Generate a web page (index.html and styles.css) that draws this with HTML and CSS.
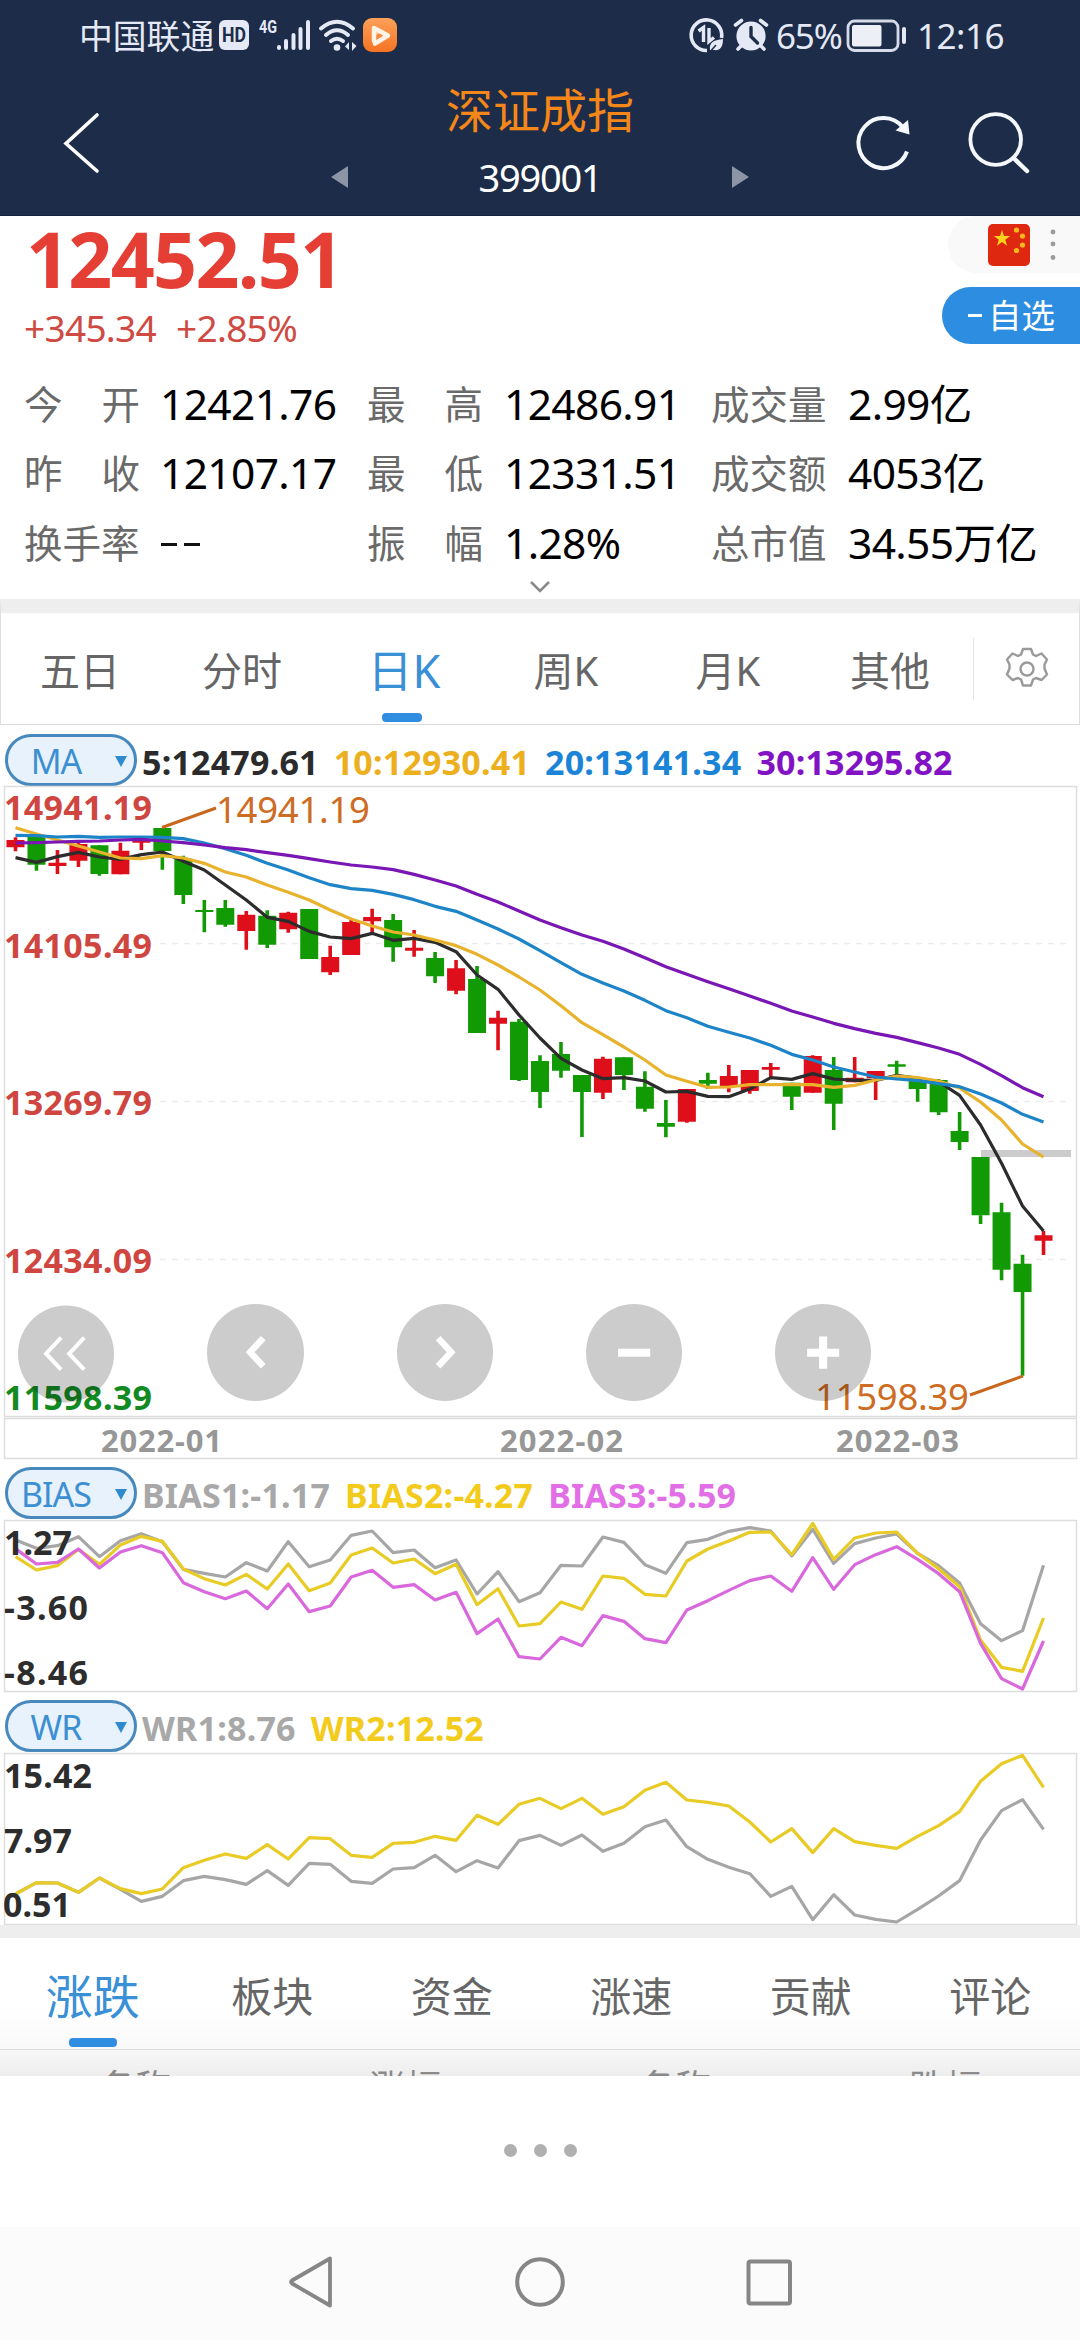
FILE: index.html
```html
<!DOCTYPE html>
<html lang="zh-CN">
<head>
<meta charset="utf-8">
<title>深证成指 399001</title>
<link rel="stylesheet" href="styles.css">
</head>
<body>
<header class="top">
  <div class="status">
    <span class="carrier">中国联通</span>
    <svg class="status-icons" width="186" height="50" viewBox="217 12 186 50">
      <rect x="219" y="21" width="30" height="30" rx="6" fill="#e4e9f5"/>
      <text x="222" y="43" class="hd" textLength="24" lengthAdjust="spacingAndGlyphs">HD</text>
      <text x="259" y="34" class="g4" textLength="18" lengthAdjust="spacingAndGlyphs">4G</text>
      <g stroke="#e4e9f5" stroke-width="4" stroke-linecap="round">
        <path d="M279 48v1M286 42v7M293.5 36v13M300.500 30v19M308 23v26"/>
      </g>
      <g fill="none" stroke="#e4e9f5" stroke-width="4" stroke-linecap="round">
        <path d="M321 29.500Q337 16 353 29.500M326 36Q337 26.500 348 36M331 42Q337 37.500 343 42"/>
      </g>
      <circle cx="337" cy="48.500" r="3.300" fill="#e4e9f5"/>
      <path d="M349 43v8l-4-3.500zM352 43v9l4.500-5z" fill="#e4e9f5"/>
      <defs><linearGradient id="og" x1="0" y1="0" x2="0" y2="1"><stop offset="0" stop-color="#fca05a"/><stop offset="1" stop-color="#f57322"/></linearGradient></defs>
      <rect x="363" y="19" width="34" height="34" rx="9" fill="url(#og)"/>
      <path d="M374 42V29l14 7.500-13 8" fill="none" stroke="#fff3e6" stroke-width="4.500" stroke-linejoin="round" stroke-linecap="round"/>
      <path d="M374 27l9 5-9 5z" fill="#fff3e6" opacity=".6"/>
    </svg>
    <span class="spacer"></span>
    <svg width="84" height="50" viewBox="687 12 84 50">
      <path d="M707 51.500A15.300 15.300 0 1 1 721.500 39" fill="none" stroke="#e4e9f5" stroke-width="3.600"/>
      <path d="M698.500 32l5-3.500V43M709 29v13.500l5-4" fill="none" stroke="#e4e9f5" stroke-width="3.400"/>
      <path d="M710 51c-1-7 3-10 13-11 0 8-3 12-9 11z" fill="#e4e9f5"/><path d="M709 54l7-8" stroke="#1d2c49" stroke-width="1.500"/>
      <circle cx="751" cy="37" r="14.600" fill="#e4e9f5"/>
      <path d="M735.500 26l6-4.500M766.500 26l-6-4.500M738 50l4-4M764 50l-4-4" stroke="#e4e9f5" stroke-width="3.600" stroke-linecap="round"/>
      <path d="M751 28.500v9l6.500 6.500" fill="none" stroke="#1d2c49" stroke-width="3.400" stroke-linecap="round"/>
    </svg>
    <span class="battery-text">65%</span>
    <svg class="battery" width="66" height="36" viewBox="845 19 66 36">
      <rect x="848" y="22" width="50" height="29.500" rx="6.500" fill="none" stroke="#d5dbe8" stroke-width="2.800"/>
      <rect x="852" y="26" width="29.500" height="21.500" rx="2" fill="#eceff5"/>
      <rect x="902" y="28" width="4" height="17" rx="2" fill="#e4e9f5"/>
    </svg>
    <span class="clock">12:16</span>
  </div>
  <div class="titlebar">
    <svg width="320" height="144" viewBox="0 72 320 144"><path d="M97 115L66 143.500 97 171" fill="none" stroke="#fff" stroke-width="3.600" stroke-linecap="round"/></svg>
    <div class="title">
      <h1>深证成指</h1>
      <div class="code">
        <svg width="18" height="24" viewBox="0 0 18 24"><path d="M17 1v22L0 12z" fill="#8c95a6"/></svg>
        <span>399001</span>
        <svg width="18" height="24" viewBox="0 0 18 24"><path d="M1 1v22l17-11z" fill="#8c95a6"/></svg>
      </div>
    </div>
    <svg width="320" height="144" viewBox="760 72 320 144">
      <path d="M907 151.500A25 25 0 1 1 903 127.500" fill="none" stroke="#f4f8fc" stroke-width="4"/>
      <path d="M908 120l1.500 14.500-14-4z" fill="#f4f8fc"/>
      <circle cx="995.700" cy="139.500" r="25.300" fill="none" stroke="#f4f8fc" stroke-width="3.800"/>
      <path d="M1013.500 158l13.500 13" stroke="#f4f8fc" stroke-width="4.500" stroke-linecap="round"/>
    </svg>
  </div>
</header>

<section class="quote">
  <div class="quote-head">
    <div>
      <div class="price">12452.51</div>
      <div class="change"><span>+345.34</span><span>+2.85%</span></div>
    </div>
    <div class="quote-side">
      <div class="flagbar">
        <svg width="42" height="42" viewBox="0 0 42 42"><rect width="42" height="42" rx="5" fill="#de2910"/><path fill="#ffd21c" d="M14 6l2 6h6.200l-5 3.800 1.900 6-5.100-3.700-5.100 3.700 1.900-6-5-3.800H12z"/><g fill="#f5b81c"><circle cx="28.500" cy="6" r="2.600"/><circle cx="34.500" cy="12" r="2.600"/><circle cx="34.500" cy="21" r="2.600"/><circle cx="28.500" cy="26.500" r="2.600"/></g></svg>
        <svg width="6" height="34" viewBox="0 0 6 34"><g fill="#9b9b9b"><circle cx="3" cy="4" r="2.400"/><circle cx="3" cy="16" r="2.400"/><circle cx="3" cy="29.500" r="2.400"/></g></svg>
      </div>
      <button class="watch"><i></i>自选</button>
    </div>
  </div>
  <dl class="stats">
    <dt><b>今</b><b>开</b></dt><dd>12421.76</dd><dt><b>最</b><b>高</b></dt><dd>12486.91</dd><dt>成交量</dt><dd>2.99亿</dd>
    <dt><b>昨</b><b>收</b></dt><dd>12107.17</dd><dt><b>最</b><b>低</b></dt><dd>12331.51</dd><dt>成交额</dt><dd>4053亿</dd>
    <dt>换手率</dt><dd class="none"><i></i><i></i></dd><dt><b>振</b><b>幅</b></dt><dd>1.28%</dd><dt>总市值</dt><dd>34.55万亿</dd>
  </dl>
  <svg class="more" width="22" height="14" viewBox="0 0 22 14"><path d="M2 2l9 9 9-9" fill="none" stroke="#8a8a8a" stroke-width="2.600"/></svg>
</section>

<nav class="periods">
  <a>五日</a><a>分时</a><a class="on">日K</a><a>周K</a><a>月K</a><a>其他</a>
  <span class="gear">
    <svg width="44" height="46" viewBox="-22 -23 44 46" fill="none" stroke="#9a9a9a" stroke-width="2.400" stroke-linejoin="round">
      <path d="M-4-20h8l2 5.500 3 1.500 5.500-2.500 5.500 6-2.500 5v4l2.500 6-5.500 5.500-5.500-2-3 1.500-2 6h-8l-2-6-3-1.500-5.500 2-5.500-5.500 2.500-6v-4l-2.500-5 5.500-6 5.500 2.500 3-1.500z"/>
      <circle r="6.500"/>
    </svg>
  </span>
</nav>

<div class="legend ma"><button class="pick">MA</button><span class="c-black">5:12479.61</span><span class="c-amber">10:12930.41</span><span class="c-blue">20:13141.34</span><span class="c-purple">30:13295.82</span></div>

<div class="kchart">
<svg width="1080" height="673" viewBox="0 786 1080 673">
  <path class="frame" d="M4.500 786.500H1076.500V1458.500H4.500zM4.500 1416.500H1076.500M4.500 1418.500H1076.500"/>
  <path class="grid" d="M160 943.500H1071M160 1101.500H1071M160 1259.500H1071"/>
  <rect x="981" y="1150" width="90" height="7" fill="#ccc"/>
  <g class="series" transform="matrix(20.98 0 0 .33333 15.500 780)">
    <path class="wick g" d="M1 165V272M4 196V287M7 144V269M8 227V372M9 360V457M10 360V440M12 391V504M14 387V537M18 402V545M20 516V609M22 558V759M24 717V903M25 826V984M26 786V893M27 885V1071M29 832V930M30 874V995M31 960V1072M33 878V927M37 908V990M39 831V1050M42 842V890M43 897V965M44 897V1005M45 996V1110M46 1306V1332M47 1268V1501M48 1424V1787"/>
    <path class="wick r" d="M0 172V214M2 210V282M3 188V261M5 188V283M6 172V210M11 393V509M13 395V458M15 497V585M16 420V525M17 386V459M19 450V530M21 540V643M23 692V811M28 830V957M32 927V1028M34 855V937M35 870V941M36 849V893M38 826V938M40 831V907M41 873V960M49 1353V1425"/>
    <path class="body g" d="M1 170V254M4 196V282M7 144V213M8 236V345M9 390V396M10 384V434M12 407V494M14 387V537M18 420V502M20 534V589M22 597V759M24 725V900M25 843V936M26 822V872M27 885V936M29 832V885M30 920V986M31 1029V1040M33 900V911M37 908V950M39 870V971M42 853V860M43 900V927M44 900V997M45 1053V1086M46 1131V1306M47 1297V1469M48 1451V1536"/>
    <path class="body r" d="M0 180V202M2 248V258M3 192V242M5 212V283M6 178V188M11 404V453M13 398V448M15 531V577M16 426V525M17 411V424M19 503V512M21 565V632M23 713V731M28 836V938M32 927V1025M34 888V918M35 870V933M36 861V869M38 828V938M40 893V907M41 873V895M49 1366V1382"/>
    <polyline class="line l-black" points="0 233 1 247 2 230 3 217 4 231 5 238 6 224 7 216 8 244 9 270 10 315 11 360 12 412 13 424 14 454 15 471 16 476 17 460 18 481 19 475 20 487 21 515 22 585 23 628 24 705 25 774 26 835 27 870 28 896 29 893 30 903 31 936 32 934 33 949 34 950 35 927 36 893 37 898 38 881 39 897 40 901 41 901 42 886 43 895 44 905 45 946 46 1035 47 1150 48 1278 49 1353"/>
    <polyline class="line l-amber" points="0 143 1 162 2 180 3 198 4 216 5 234 6 236 7 227 8 234 9 250 10 276 11 291 12 315 13 337 14 360 15 390 16 417 17 438 18 456 19 465 20 480 21 497 22 523 23 555 24 591 25 630 26 677 27 728 28 764 29 801 30 840 31 885 32 904 33 922 34 921 35 914 36 914 37 914 38 914 39 922 40 916 41 900 42 888 43 893 44 903 45 924 46 966 47 1020 48 1092 49 1131"/>
    <polyline class="line l-blue" points="0 166 1 167 2 171 3 169 4 172 5 171 6 171 7 172 8 176 9 189 10 206 11 226 12 250 13 270 14 293 15 314 16 326 17 331 18 343 19 359 20 379 21 394 22 420 23 447 24 477 25 512 26 548 27 583 28 609 29 633 30 661 31 692 32 713 33 739 34 757 35 774 36 796 37 823 38 840 39 861 40 876 41 891 42 897 43 902 44 911 45 920 46 942 47 969 48 1003 49 1026"/>
    <polyline class="line l-purple" points="0 189 1 188 2 186 3 184 4 183 5 180 6 178 7 183 8 188 9 195 10 203 11 209 12 218 13 226 14 236 15 246 16 255 17 261 18 269 19 283 20 300 21 318 22 343 23 366 24 393 25 420 26 443 27 465 28 484 29 507 30 533 31 560 32 583 33 605 34 626 35 648 36 670 37 693 38 711 39 730 40 746 41 760 42 772 43 788 44 804 45 823 46 853 47 887 48 923 49 950"/>
  </g>
  <path d="M162 827.500L216 808M970 1395L1023 1376" stroke="#c8681e" stroke-width="3" fill="none"/>
  <g class="axis red">
    <text x="4" y="820" textLength="148">14941.19</text>
    <text x="4" y="957.500" textLength="148">14105.49</text>
    <text x="4" y="1114.500" textLength="148">13269.79</text>
    <text x="4" y="1273" textLength="148">12434.09</text>
    <text x="4" y="1410" textLength="148" class="green">11598.39</text>
  </g>
  <g class="mark"><text x="216" y="823" textLength="154">14941.19</text><text x="815" y="1410" textLength="154">11598.39</text></g>
  <g class="dates"><text x="101" y="1451.500" textLength="121">2022-01</text><text x="500" y="1451.500" textLength="123">2022-02</text><text x="836" y="1451.500" textLength="123">2022-03</text></g>
</svg>
<div class="controls">
  <button class="first"><svg viewBox="0 0 96 96"><path d="M43 32L28 48l15 16M66 32L51 48l15 16" fill="none" stroke="#fff" stroke-width="4"/></svg></button>
  <button><svg viewBox="0 0 96 96"><path d="M56 34L43 48l13 14" fill="none" stroke="#fff" stroke-width="6.500"/></svg></button>
  <button><svg viewBox="0 0 96 96"><path d="M41 34l13 14-13 14" fill="none" stroke="#fff" stroke-width="6.500"/></svg></button>
  <button><svg viewBox="0 0 96 96"><path d="M32 48.500h32" stroke="#fff" stroke-width="8"/></svg></button>
  <button><svg viewBox="0 0 96 96"><path d="M32 48.500h32M48 32.500v32" stroke="#fff" stroke-width="8"/></svg></button>
</div>
</div>

<div class="legend bias"><button class="pick">BIAS</button><span class="c-grey">BIAS1:-1.17</span><span class="c-yellow">BIAS2:-4.27</span><span class="c-pink">BIAS3:-5.59</span></div>
<svg class="sub" width="1080" height="172" viewBox="0 1520 1080 172">
  <path class="frame" d="M4.500 1520.500H1076.500V1691.500H4.500z"/>
  <g class="series" transform="matrix(20.98 0 0 .33333 15.500 1460)">
    <polyline class="line l-grey" points="0 240 1 265 2 257 3 230 4 290 5 242 6 221 7 245 8 328 9 340 10 351 11 308 12 333 13 245 14 320 15 300 16 226 17 213 18 278 19 270 20 323 21 300 22 402 23 335 24 425 25 398 26 316 27 318 28 231 29 247 30 314 31 340 32 248 33 238 34 214 35 203 36 213 37 288 38 208 39 310 40 251 41 234 42 222 43 280 44 317 45 369 46 491 47 542 48 512 49 316"/>
    <polyline class="line l-yellow" points="0 290 1 330 2 317 3 268 4 313 5 255 6 229 7 244 8 327 9 356 10 375 11 343 12 387 13 312 14 392 15 369 16 285 17 264 18 309 19 297 20 341 21 313 22 434 23 386 24 498 25 491 26 426 27 448 28 348 29 355 30 403 31 408 32 303 33 267 34 243 35 217 36 216 37 284 38 190 39 298 40 234 41 219 42 216 43 280 44 326 45 380 46 540 47 622 48 634 49 474"/>
    <polyline class="line l-pink" points="0 266 1 312 2 307 3 267 4 324 5 276 6 257 7 278 8 368 9 395 10 416 11 393 12 446 13 372 14 455 15 438 16 351 17 331 18 382 19 374 20 420 21 397 22 521 23 477 24 590 25 597 26 532 27 557 28 467 29 484 30 536 31 548 32 450 33 422 34 391 35 362 36 348 37 394 38 293 39 388 40 314 41 284 42 260 43 298 44 341 45 395 46 550 47 656 48 687 49 543"/>
  </g>
  <g class="axis"><text x="4" y="1554.500" textLength="68">1.27</text><text x="4" y="1620" textLength="84">-3.60</text><text x="4" y="1685" textLength="84">-8.46</text></g>
</svg>

<div class="legend wr"><button class="pick">WR</button><span class="c-grey">WR1:8.76</span><span class="c-yellow">WR2:12.52</span></div>
<svg class="sub" width="1080" height="172" viewBox="0 1753 1080 172">
  <path class="frame" d="M4.500 1753.500H1076.500V1924.500H4.500z"/>
  <g class="series" transform="matrix(20.98 0 0 .33333 15.500 1460)">
    <polyline class="line l-grey" points="0 1302 1 1268 2 1269 3 1297 4 1254 5 1288 6 1324 7 1309 8 1262 9 1249 10 1259 11 1273 12 1232 13 1276 14 1210 15 1213 16 1264 17 1270 18 1227 19 1223 20 1186 21 1235 22 1202 23 1224 24 1142 25 1126 26 1156 27 1125 28 1174 29 1150 30 1100 31 1080 32 1160 33 1198 34 1222 35 1241 36 1309 37 1279 38 1379 39 1304 40 1365 41 1378 42 1386 43 1348 44 1308 45 1262 46 1140 47 1052 48 1019 49 1108"/>
    <polyline class="line l-yellow" points="0 1302 1 1268 2 1269 3 1297 4 1254 5 1286 6 1301 7 1287 8 1223 9 1201 10 1182 11 1195 12 1154 13 1197 14 1133 15 1136 16 1186 17 1192 18 1150 19 1147 20 1129 21 1141 22 1066 23 1093 24 1033 25 1015 26 1046 27 1015 28 1063 29 1040 30 991 31 967 32 1020 33 1027 34 1038 35 1086 36 1146 37 1106 38 1178 39 1106 40 1145 41 1156 42 1165 43 1129 44 1097 45 1055 46 964 47 911 48 886 49 982"/>
  </g>
  <g class="axis"><text x="4" y="1788" textLength="88">15.42</text><text x="4" y="1853" textLength="68">7.97</text><text x="3" y="1917" textLength="68">0.51</text></g>
</svg>

<nav class="boards"><a class="on">涨跌</a><a>板块</a><a>资金</a><a>涨速</a><a>贡献</a><a>评论</a></nav>
<div class="thead"><span>名称</span><span>涨幅</span><span>名称</span><span>跌幅</span></div>
<footer class="dots"><i></i><i></i><i></i></footer>
<div class="sysnav">
  <svg width="48" height="54" viewBox="0 0 48 54"><path d="M43 3.500v47L5 28.500q-2-1.500 0-3z" fill="none" stroke="#868686" stroke-width="3.800" stroke-linejoin="round"/></svg>
  <svg width="54" height="54" viewBox="0 0 54 54"><circle cx="27" cy="27" r="22.800" fill="none" stroke="#868686" stroke-width="4"/></svg>
  <svg width="48" height="54" viewBox="0 0 48 54"><rect x="3.500" y="6.500" width="41.500" height="42" rx="2" fill="none" stroke="#868686" stroke-width="4"/></svg>
</div>
</body>
</html>
```
FILE: styles.css
```css
* { box-sizing: border-box; }
body { margin: 0; width: 1080px; height: 2340px; overflow: hidden; background: #fff; color: #000;
  font-family: "Noto Sans", "Noto Sans CJK SC", sans-serif; display: flex; flex-direction: column; }
body > * { flex: none; }
svg { display: block; overflow: visible; }
button { font: inherit; border: 0; padding: 0; margin: 0; }
h1, dl, dd { margin: 0; }

.top { height: 216px; background: #1d2c49; border-bottom: 1px solid #15203a; }
.status { height: 72px; padding: 0 76px 0 79px; display: flex; align-items: center; color: #e4e9f5; line-height: 74px; }
.carrier { font-size: 33.800px; width: 138px; white-space: nowrap; }
.status .spacer { flex: 1; }
.hd { font: 700 20px "Roboto", sans-serif; fill: #1d2c49; }
.g4 { font: 700 19px "Roboto", sans-serif; fill: #e4e9f5; }
.battery-text { font-size: 35px; width: 70px; margin-left: 5px; letter-spacing: -1.200px; }
.battery { margin-left: -1px; }
.clock { font-size: 35px; width: 87px; margin-left: 6px; letter-spacing: -.500px; }
.titlebar { height: 144px; display: flex; }
.title { width: 440px; display: flex; flex-direction: column; align-items: center; }
.title h1 { font-size: 47px; font-weight: 400; line-height: 60px; height: 80px; padding-top: 8px; color: #f58718; }
.code { display: flex; justify-content: space-between; align-items: center; width: 418px; height: 50px; color: #fff; font-size: 38px; letter-spacing: -1.200px; line-height: 50px; }

.quote { height: 383px; }
.quote-head { height: 148px; display: flex; justify-content: space-between; }
.price { padding: 0 0 0 26px; margin-top: 1px; height: 85px; line-height: 84px; font-size: 77px; font-weight: 700; color: #e53e35; letter-spacing: -1.700px; }
.change { padding-left: 24px; display: flex; gap: 20px; font-size: 37px; line-height: 52px; color: #cf4a42; letter-spacing: -.700px; }
.quote-side { display: flex; flex-direction: column; align-items: flex-end; }
.flagbar { width: 132px; height: 57px; border-radius: 28px 0 0 28px; background: #f9f9f9; display: flex; align-items: center; padding-left: 40px; gap: 20px; margin-bottom: 14px; }
.watch { width: 138px; height: 57px; border-radius: 29px 0 0 29px; background: #2d8de0; color: #fff; font-size: 33.500px; line-height: 59px; display: flex; align-items: center; gap: 6px; padding-left: 26px; }
.watch i { width: 14px; height: 3px; background: #fff; }
.stats { display: grid; grid-template-columns: 135px 208px 136px 208px 136px 1fr; grid-auto-rows: 69.300px; padding: 5px 0 0 25px; line-height: 69.300px; }
.stats dt { display: flex; justify-content: space-between; width: 116px; font-size: 38.500px; color: #6a6a6a; padding-top: 1px; margin-left: -1px; }
.stats b { font-weight: 400; }
.stats dd { font-size: 42.500px; letter-spacing: -.650px; white-space: nowrap; }
.stats dd.none { display: flex; align-items: center; gap: 7px; padding: 4px 0 0 1px; }
.none i { width: 16px; height: 3px; background: #111; }
.more { margin: 3px auto 0; }

.periods { height: 126px; border: 1px solid #ddd; border-top: 14px solid #eee; display: flex; align-items: center; background: #fff; }
.periods a, .boards a { position: relative; color: #666; text-align: center; }
.periods a { width: 162px; height: 111px; line-height: 115px; font-size: 40px; padding-right: 4px; }
.periods .on { font-size: 45px; color: #3a90d6; }
.periods .on::after, .boards .on::after { content: ""; position: absolute; left: 50%; bottom: 2px; width: 40px; height: 9px; margin-left: -24px; border-radius: 4px; background: #318de0; }
.gear { flex: 1; height: 62px; border-left: 1px solid #e5e5e5; display: flex; align-items: center; justify-content: center; }

.legend { display: flex; align-items: flex-start; height: 61px; padding-left: 5px; font-size: 34px; font-weight: 700; line-height: 50px; white-space: nowrap; letter-spacing: .200px; }
.legend span { margin: 3px 0 0 15px; }
.legend .pick + span { margin-left: 5px; }
.ma { padding-top: 9px; }
.bias, .wr { padding-top: 8px; }
.pick { width: 132px; height: 52px; border: 3px solid #4889bd; border-radius: 26px; background: #e7f2fc; color: #3c8fd2; font-size: 34px; font-weight: 400; line-height: 48px; display: flex; align-items: center; justify-content: center; padding: 2px 30px 0 0; position: relative; letter-spacing: -1px; }
.pick::after { content: ""; position: absolute; right: 7px; top: 19px; border: 6.500px solid transparent; border-top: 11px solid #2f8ad0; border-bottom: 0; }
.c-black { color: #2b2b2b; } .c-amber { color: #ecb01f; } .c-blue { color: #1c84d6; } .c-purple { color: #8213c4; }
.c-grey { color: #a8a8a8; } .c-yellow { color: #f3cb1c; } .c-pink { color: #e36fe6; }

.kchart { position: relative; height: 673px; }
.frame { fill: none; stroke: #dedede; stroke-width: 1.500; }
.grid { stroke: #ececec; stroke-width: 1.500; stroke-dasharray: 6 6; }
.series * { vector-effect: non-scaling-stroke; fill: none; }
.wick { stroke-width: 3.600; } .body { stroke-width: 18; }
.g { stroke: #129a04; } .r { stroke: #de0f1b; }
.line { stroke-width: 3.200; stroke-linejoin: round; }
.l-black { stroke: #2c2c2c; } .l-amber { stroke: #e8b22c; } .l-blue { stroke: #1e84c8; } .l-purple { stroke: #7a16b4; }
.l-grey { stroke: #a6a6a6; } .l-yellow { stroke: #e9cb25; } .l-pink { stroke: #d868dc; }
.axis { font-size: 34px; font-weight: 700; fill: #2d2d2d; }
.axis.red { fill: #cf4540; } .axis .green { fill: #128a22; }
.mark { font-size: 36.500px; fill: #cd6c22; }
.dates { font-size: 31px; font-weight: 700; fill: #979797; }
.controls { position: absolute; left: 18px; top: 518px; display: flex; gap: 93px; }
.controls button { width: 96.300px; height: 97px; border-radius: 50%; background: rgba(0, 0, 0, .2); }
.controls .first { transform: translateY(1.500px); }

.boards { height: 125px; border-top: 13px solid #eee; border-bottom: 1px solid #ddd; display: flex; padding-left: 3px; background: linear-gradient(#fff 60%, #f9f9f9); }
.boards a { width: 180px; line-height: 116px; font-size: 41px; }
.boards .on { font-size: 47px; color: #3a90d6; }
.boards .on::after { width: 48px; margin-left: -24px; }
.thead { height: 26px; overflow: hidden; display: grid; grid-template-columns: repeat(4, 270px); text-align: center; font-size: 36px; line-height: 75px; color: #8a8a8a; background: linear-gradient(#f8f8f8, #ededed); }
.dots { height: 151px; padding-bottom: 3px; display: flex; justify-content: center; align-items: center; gap: 17px; }
.dots i { width: 13px; height: 13px; border-radius: 50%; background: #b0b0b0; }
.sysnav { flex: 1; background: #fbfbfb; display: flex; justify-content: center; gap: 178px; padding-top: 28px; }
```
